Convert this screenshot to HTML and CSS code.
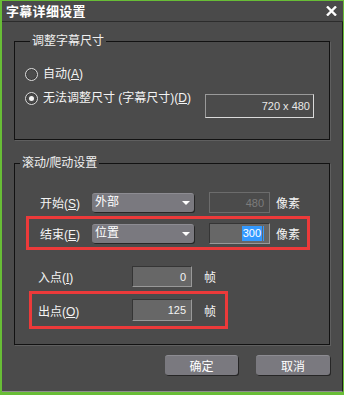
FILE: index.html
```html
<!DOCTYPE html>
<html lang="zh-CN">
<head>
<meta charset="utf-8">
<title>字幕详细设置</title>
<link rel="stylesheet" href="styles.css">
</head>
<body>
<div class="window">
  <div class="titlebar">
    <span class="title">字幕详细设置</span>
    <svg class="close" width="11" height="10" viewBox="0 0 11 10"><path d="M1 0.5 L10 9.5 M10 0.5 L1 9.5" stroke="#fff" stroke-width="2.4" fill="none"/></svg>
  </div>
  <div class="body">
    <div class="group g1">
      <div class="group-title">调整字幕尺寸</div>
      <label class="radio r1"><span class="dot"></span><span class="rtext">自动(<u>A</u>)</span></label>
      <div class="radio-row">
        <label class="radio"><span class="dot on"></span><span class="rtext">无法调整尺寸 (字幕尺寸)(<u>D</u>)</span></label>
        <div class="field size">720 x 480</div>
      </div>
    </div>

    <div class="group g2">
      <div class="group-title">滚动/爬动设置</div>
      <div class="row row-start">
        <span class="lbl">开始(<u>S</u>)</span>
        <div class="combo">外部<span class="arrow"></span></div>
        <div class="field num disabled">480</div>
        <span class="unit">像素</span>
      </div>
      <div class="hl hl1">
        <div class="row">
          <span class="lbl">结束(<u>E</u>)</span>
          <div class="combo">位置<span class="arrow"></span></div>
          <div class="field num"><span class="sel">300</span><span class="caret"></span></div>
          <span class="unit">像素</span>
        </div>
      </div>
      <div class="row row-in">
        <span class="lbl wide">入点(<u>I</u>)</span>
        <div class="field frame">0</div>
        <span class="unit u2">帧</span>
      </div>
      <div class="hl hl2">
        <div class="row tall">
          <span class="lbl wide2">出点(<u>O</u>)</span>
          <div class="field frame">125</div>
          <span class="unit u2">帧</span>
        </div>
      </div>
    </div>

    <div class="buttons">
      <button class="btn ok">确定</button>
      <button class="btn cancel">取消</button>
    </div>
  </div>
</div>
</body>
</html>
```

FILE: styles.css
```css
html, body {
  margin: 0;
  padding: 0;
  background: #4b4b4b;
}

.window {
  width: 344px;
  height: 395px;
  box-sizing: border-box;
  border-style: solid;
  border-color: #68bd36;
  border-width: 1px 1px 3px 2px;
  background: #4b4b4b;
  display: flex;
  flex-direction: column;
  font-family: "Liberation Sans", "Noto Sans CJK SC", sans-serif;
  font-size: 12px;
  color: #f4f4f4;
}

.titlebar {
  height: 20px;
  border-bottom: 1px solid #2c2c2c;
  display: flex;
  align-items: center;
  justify-content: space-between;
  padding: 0 6px 0 4px;
  background: #4a4a4a;
}

.title {
  font-family: "Noto Sans CJK SC", sans-serif;
  font-weight: bold;
  font-size: 13px;
  line-height: 16px;
  color: #fff;
  letter-spacing: 0.3px;
}

.close {
  display: block;
  margin-top: -1px;
}

.body {
  flex: 1;
  border-right: 1px solid #1c1c1c;
  border-bottom: 1px solid #8e8e8e;
  padding-left: 12px;
  display: flex;
  flex-direction: column;
}

.group {
  width: 316px;
  box-sizing: border-box;
  border: 1px solid #121212;
  box-shadow: 1px 1px 0 #5f5f5f;
  display: flex;
  flex-direction: column;
}

.group-title {
  align-self: flex-start;
  margin: -9px 0 0 5px;
  padding: 0 2px;
  height: 16px;
  line-height: 16px;
  font-size: 12px;
  background: #4b4b4b;
  color: #f0f0f0;
}

.g1 {
  margin-top: 19px;
  padding-left: 10px;
  padding-bottom: 21px;
}

.radio {
  display: flex;
  align-items: center;
  height: 16px;
  line-height: 16px;
  gap: 5px;
}

.rtext {
  white-space: nowrap;
}

.r1 {
  margin-top: 17px;
}

.dot {
  width: 11px;
  height: 11px;
  border: 1px solid #dcdcdc;
  border-radius: 50%;
  background: #4b4b4b;
  position: relative;
  flex: none;
  box-shadow: inset 0 0 0 1px #3a3a3a;
}

.dot.on::after {
  content: "";
  position: absolute;
  left: 3px;
  top: 3px;
  width: 5px;
  height: 5px;
  border-radius: 50%;
  background: #f4f4f4;
}

.radio-row {
  display: flex;
  align-items: flex-start;
  justify-content: space-between;
  margin-top: 8px;
  padding-right: 15px;
}

.field {
  box-sizing: border-box;
  font-size: 11px;
  text-align: right;
  display: flex;
  align-items: center;
  justify-content: flex-end;
}

.size {
  width: 109px;
  height: 24px;
  margin-top: 4px;
  border: 1px solid #dadada;
  border-top-color: #9a9a9a;
  border-left-color: #9a9a9a;
  padding-right: 3px;
  color: #e8e8e8;
  background: #4b4b4b;
}

.g2 {
  margin-top: 23px;
  padding-bottom: 15px;
}

.row {
  display: flex;
  align-items: center;
  height: 21px;
}

.row.tall {
  height: 22px;
}

.row-start {
  margin-top: 21px;
  padding-left: 25px;
}

.lbl {
  width: 52px;
  flex: none;
}

.lbl.wide {
  width: 94px;
}

.lbl.wide2 {
  width: 94px;
}

.combo {
  width: 102px;
  height: 19px;
  box-sizing: border-box;
  background: #7a797f;
  border-radius: 3px;
  border-top: 1px solid #8d8c92;
  box-shadow: 1px 1px 0 #262626;
  padding-left: 3px;
  line-height: 17px;
  color: #fff;
  position: relative;
  flex: none;
}

.arrow {
  position: absolute;
  right: 4px;
  top: 7px;
  width: 0;
  height: 0;
  border-left: 4px solid transparent;
  border-right: 4px solid transparent;
  border-top: 4px solid #fff;
}

.num {
  width: 61px;
  height: 21px;
  margin-left: 15px;
  padding-right: 5px;
}

.field.disabled {
  background: #4b4b4b;
  border: 1px solid #6c6c6c;
  color: #7c7c7c;
}

.num:not(.disabled), .frame {
  background: #676767;
  border: 1px solid #999;
  border-top-color: #353535;
  border-left-color: #353535;
  color: #f4f4f4;
}

.sel {
  background: #3399ff;
  color: #fff;
  padding: 0 1px;
  line-height: 15px;
}

.caret {
  width: 1px;
  height: 15px;
  background: #3399ff;
  margin-left: 1px;
}

.unit {
  margin-left: 6px;
}

.unit.u2 {
  margin-left: 12px;
}

.hl {
  box-sizing: border-box;
  border: 3px solid #ec3a3a;
}

.hl1 {
  margin: 3px 0 0 11px;
  width: 284px;
  padding: 4px 0 3px 11px;
}

.row-in {
  margin-top: 16px;
  padding-left: 23px;
}

.frame {
  width: 60px;
  height: 21px;
  padding-right: 5px;
}

.row.tall .frame {
  height: 22px;
}

.hl2 {
  margin: 4px 0 0 14px;
  width: 199px;
  padding: 5px 0 5px 6px;
}

.buttons {
  width: 316px;
  display: flex;
  justify-content: flex-end;
  gap: 18px;
  margin-top: 10px;
}

.btn {
  height: 20px;
  box-sizing: border-box;
  border: none;
  border-top: 1px solid #8d8c92;
  border-radius: 3px;
  background: #7a797f;
  box-shadow: 1px 1px 0 #262626;
  color: #fff;
  font-family: "Noto Sans CJK SC", sans-serif;
  font-size: 12px;
  line-height: 18px;
  padding: 0;
}

.btn.ok {
  width: 73px;
}

.btn.cancel {
  width: 74px;
}
```
